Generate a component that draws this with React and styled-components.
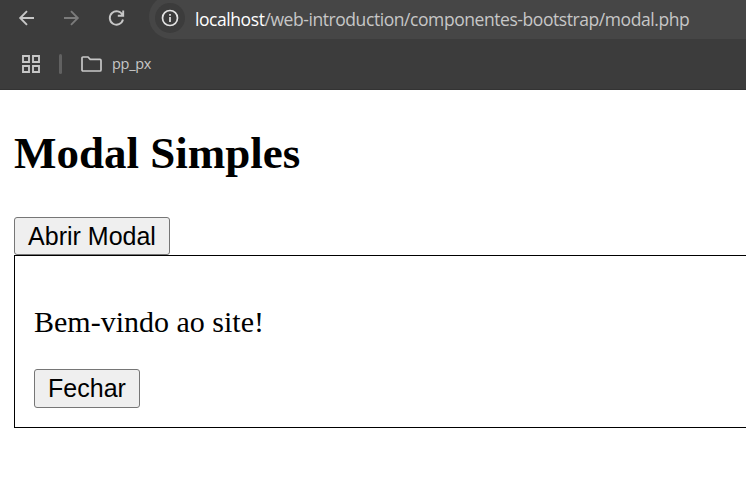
import React from 'react';
import styled, { createGlobalStyle } from 'styled-components';

const GlobalStyle = createGlobalStyle`
  * { box-sizing: border-box; }
  body { margin: 0; background: #fff; overflow: hidden; }
`;

const Window = styled.div`
  width: 100vw;
  height: 100vh;
  overflow: hidden;
  background: #fff;
`;

const BrowserChrome = styled.header`
  height: 90px;
  overflow: hidden;
  background: #3c3c3c;
  border-bottom: 1px solid #333;
`;

const NavigationBar = styled.div`
  display: flex;
  height: 39px;
  padding-left: 16px;
`;

const NavButton = styled.span`
  display: flex;
  width: 45px;
  height: 35px;
  align-items: center;
  color: ${({ $muted }) => ($muted ? '#7b7b7b' : '#c7c7c7')};
`;

const AddressBar = styled.div`
  display: flex;
  flex: 1;
  align-items: center;
  height: 44px;
  margin: -5px -40px 0 -2px;
  padding-left: 6px;
  border-radius: 22px;
  background: #464646;
  white-space: nowrap;
`;

const SiteInfo = styled.span`
  display: flex;
  width: 30px;
  height: 30px;
  margin-top: 2px;
  align-items: center;
  justify-content: center;
  border-radius: 50%;
  background: #3c3c3c;
  color: #e3e3e3;
`;

const Url = styled.span`
  margin: 3px 0 0 10px;
  color: #c7c7c7;
  font: 17.5px/24px "Open Sans", "Noto Sans", sans-serif;
  letter-spacing: -0.43px;
`;

const Host = styled.span`
  color: #fff;
`;

const Bookmarks = styled.div`
  display: flex;
  height: 50px;
  padding-left: 22px;
  align-items: center;
  color: #c7c7c7;
`;

const Divider = styled.span`
  width: 3px;
  height: 20px;
  margin: 0 19px 0 19px;
  border-radius: 2px;
  background: #616161;
`;

const BookmarkLabel = styled.span`
  margin-left: 10px;
  font: 14.5px/20px "Open Sans", "Noto Sans", sans-serif;
  letter-spacing: -0.3px;
`;

const Page = styled.main`
  padding: 37px 0 0 14px;
`;

const Title = styled.h2`
  margin: 0 0 38px;
  font: bold 45px/52px "Liberation Serif", serif;
  color: #000;
`;

const Button = styled.button`
  display: block;
  width: ${({ $width }) => $width}px;
  height: ${({ $height }) => $height}px;
  padding: 0 0 ${({ $height }) => $height - 38}px;
  border: 1px solid #767676;
  border-radius: 3px;
  background: #efefef;
  color: #000;
  font: 25px/36px "Liberation Sans", sans-serif;
  white-space: nowrap;
`;

const Modal = styled.section`
  width: 760px;
  height: 173px;
  padding: 49px 19px 0;
  border: 1px solid #000;
`;

const Message = styled.p`
  margin: 0 0 30px;
  font: 30px/34px "Liberation Serif", serif;
  color: #000;
`;

const Icon = styled.svg`
  display: block;
  flex: none;
  fill: none;
  stroke: currentColor;
  stroke-width: ${({ $weight }) => $weight || 1.9};
`;

export default function App() {
  return (
    <Window>
      <GlobalStyle />
      <BrowserChrome>
        <NavigationBar>
          <NavButton>
            <Icon width="22" height="22" viewBox="0 0 22 22"><path d="M18 11H4.5M11 4.2 4.2 11l6.8 6.8" /></Icon>
          </NavButton>
          <NavButton $muted>
            <Icon width="22" height="22" viewBox="0 0 22 22"><path d="M3 11h13.5M10 4.2l6.8 6.8-6.8 6.8" /></Icon>
          </NavButton>
          <NavButton>
            <Icon width="22" height="22" viewBox="0 0 22 22"><path d="M16.6 8.2A6.7 6.7 0 1 0 17 12.6M17.2 3.5v5.3h-5.4" /></Icon>
          </NavButton>
          <AddressBar>
            <SiteInfo>
              <Icon $weight={1.7} width="20" height="20" viewBox="0 0 20 20"><circle cx="10" cy="10" r="7.5" /><path d="M10 9v5M10 6v1.8" /></Icon>
            </SiteInfo>
            <Url><Host>localhost</Host>/web-introduction/componentes-bootstrap/modal.php</Url>
          </AddressBar>
        </NavigationBar>
        <Bookmarks>
          <Icon width="18" height="18" viewBox="0 0 18 18"><path d="M1 1h6v6H1zM11 1h6v6h-6zM1 11h6v6H1zM11 11h6v6h-6z" /></Icon>
          <Divider />
          <Icon $weight={1.7} width="21" height="16" viewBox="0 0 21 16"><path d="M2 1h5l2.2 2.4H19q1 0 1 1V14q0 1-1 1H2q-1 0-1-1V2q0-1 1-1z" /></Icon>
          <BookmarkLabel>pp_px</BookmarkLabel>
        </Bookmarks>
      </BrowserChrome>
      <Page>
        <Title>Modal Simples</Title>
        <Button $width={156} $height={38}>Abrir Modal</Button>
        <Modal>
          <Message>Bem-vindo ao site!</Message>
          <Button $width={106} $height={39}>Fechar</Button>
        </Modal>
      </Page>
    </Window>
  );
}
